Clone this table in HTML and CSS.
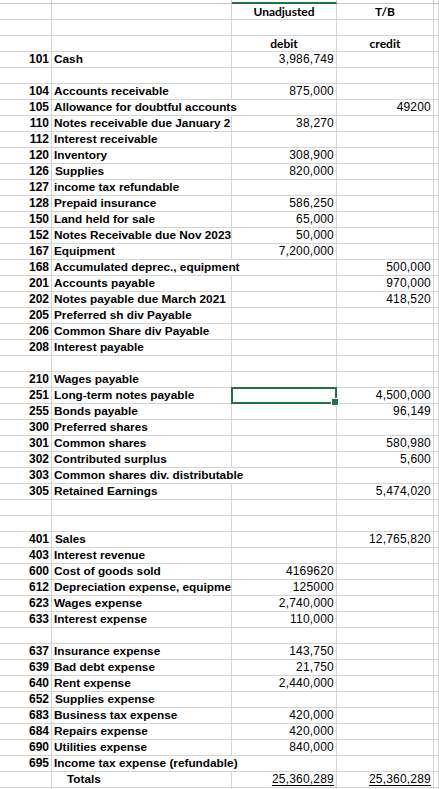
FILE: index.html
```html
<!DOCTYPE html>
<html>
<head>
<meta charset="utf-8">
<link rel="stylesheet" href="styles.css">
</head>
<body>
<div class="sheet">
  <div class="r top"><span></span><span></span><span class="sel-col"></span><span></span><span></span></div>
  <div class="r"><span></span><span></span><span class="h">Unadjusted</span><span class="h">T/B</span><span></span></div>
  <div class="r"><span></span><span></span><span></span><span></span><span></span></div>
  <div class="r"><span></span><span></span><span class="h">debit</span><span class="h">credit</span><span></span></div>
  <div class="r"><span class="a">101</span><span class="b">Cash</span><span class="n">3,986,749</span><span class="n"></span><span></span></div>
  <div class="r"><span></span><span></span><span></span><span></span><span></span></div>
  <div class="r"><span class="a">104</span><span class="b">Accounts receivable</span><span class="n">875,000</span><span class="n"></span><span></span></div>
  <div class="r"><span class="a">105</span><span class="b ov">Allowance for doubtful accounts</span><span class="n"></span><span class="n">49200</span><span></span></div>
  <div class="r"><span class="a">110</span><span class="b">Notes receivable due January 2</span><span class="n">38,270</span><span class="n"></span><span></span></div>
  <div class="r"><span class="a">112</span><span class="b">Interest receivable</span><span class="n"></span><span class="n"></span><span></span></div>
  <div class="r"><span class="a">120</span><span class="b">Inventory</span><span class="n">308,900</span><span class="n"></span><span></span></div>
  <div class="r"><span class="a">126</span><span class="b ind">Supplies</span><span class="n">820,000</span><span class="n"></span><span></span></div>
  <div class="r"><span class="a">127</span><span class="b">income tax refundable</span><span class="n"></span><span class="n"></span><span></span></div>
  <div class="r"><span class="a">128</span><span class="b">Prepaid insurance</span><span class="n">586,250</span><span class="n"></span><span></span></div>
  <div class="r"><span class="a">150</span><span class="b">Land held for sale</span><span class="n">65,000</span><span class="n"></span><span></span></div>
  <div class="r"><span class="a">152</span><span class="b">Notes Receivable due Nov 2023</span><span class="n">50,000</span><span class="n"></span><span></span></div>
  <div class="r"><span class="a">167</span><span class="b">Equipment</span><span class="n">7,200,000</span><span class="n"></span><span></span></div>
  <div class="r"><span class="a">168</span><span class="b ov">Accumulated deprec., equipment</span><span class="n"></span><span class="n">500,000</span><span></span></div>
  <div class="r"><span class="a">201</span><span class="b">Accounts payable</span><span class="n"></span><span class="n">970,000</span><span></span></div>
  <div class="r"><span class="a">202</span><span class="b">Notes payable due March 2021</span><span class="n"></span><span class="n">418,520</span><span></span></div>
  <div class="r"><span class="a">205</span><span class="b">Preferred sh div Payable</span><span class="n"></span><span class="n"></span><span></span></div>
  <div class="r"><span class="a">206</span><span class="b">Common Share div Payable</span><span class="n"></span><span class="n"></span><span></span></div>
  <div class="r"><span class="a">208</span><span class="b">Interest payable</span><span class="n"></span><span class="n"></span><span></span></div>
  <div class="r"><span></span><span></span><span></span><span></span><span></span></div>
  <div class="r"><span class="a">210</span><span class="b">Wages payable</span><span class="n"></span><span class="n"></span><span></span></div>
  <div class="r"><span class="a">251</span><span class="b">Long-term notes payable</span><span class="n active"><span class="cursor"><span class="handle"></span></span></span><span class="n">4,500,000</span><span></span></div>
  <div class="r"><span class="a">255</span><span class="b">Bonds payable</span><span class="n"></span><span class="n">96,149</span><span></span></div>
  <div class="r"><span class="a">300</span><span class="b">Preferred shares</span><span class="n"></span><span class="n"></span><span></span></div>
  <div class="r"><span class="a">301</span><span class="b">Common shares</span><span class="n"></span><span class="n">580,980</span><span></span></div>
  <div class="r"><span class="a">302</span><span class="b">Contributed surplus</span><span class="n"></span><span class="n">5,600</span><span></span></div>
  <div class="r"><span class="a">303</span><span class="b ov">Common shares div. distributable</span><span class="n"></span><span class="n"></span><span></span></div>
  <div class="r"><span class="a">305</span><span class="b">Retained Earnings</span><span class="n"></span><span class="n">5,474,020</span><span></span></div>
  <div class="r"><span></span><span></span><span></span><span></span><span></span></div>
  <div class="r"><span></span><span></span><span></span><span></span><span></span></div>
  <div class="r"><span class="a">401</span><span class="b ind">Sales</span><span class="n"></span><span class="n">12,765,820</span><span></span></div>
  <div class="r"><span class="a">403</span><span class="b">Interest revenue</span><span class="n"></span><span class="n"></span><span></span></div>
  <div class="r"><span class="a">600</span><span class="b">Cost of goods sold</span><span class="n">4169620</span><span class="n"></span><span></span></div>
  <div class="r"><span class="a">612</span><span class="b clip">Depreciation expense, equipme</span><span class="n">125000</span><span class="n"></span><span></span></div>
  <div class="r"><span class="a">623</span><span class="b">Wages expense</span><span class="n">2,740,000</span><span class="n"></span><span></span></div>
  <div class="r"><span class="a">633</span><span class="b">Interest expense</span><span class="n">110,000</span><span class="n"></span><span></span></div>
  <div class="r"><span></span><span></span><span></span><span></span><span></span></div>
  <div class="r"><span class="a">637</span><span class="b">Insurance expense</span><span class="n">143,750</span><span class="n"></span><span></span></div>
  <div class="r"><span class="a">639</span><span class="b">Bad debt expense</span><span class="n">21,750</span><span class="n"></span><span></span></div>
  <div class="r"><span class="a">640</span><span class="b">Rent expense</span><span class="n">2,440,000</span><span class="n"></span><span></span></div>
  <div class="r"><span class="a">652</span><span class="b ind">Supplies expense</span><span class="n"></span><span class="n"></span><span></span></div>
  <div class="r"><span class="a">683</span><span class="b">Business tax expense</span><span class="n">420,000</span><span class="n"></span><span></span></div>
  <div class="r"><span class="a">684</span><span class="b">Repairs expense</span><span class="n">420,000</span><span class="n"></span><span></span></div>
  <div class="r"><span class="a">690</span><span class="b">Utilities expense</span><span class="n">840,000</span><span class="n"></span><span></span></div>
  <div class="r"><span class="a">695</span><span class="b ov">Income tax expense (refundable)</span><span class="n"></span><span class="n"></span><span></span></div>
  <div class="r"><span class="a"></span><span class="b tot">Totals</span><span class="n u">25,360,289</span><span class="n u">25,360,289</span><span></span></div>
  <div class="r"><span></span><span></span><span></span><span></span><span></span></div>
</div>
</body>
</html>
```
FILE: styles.css
```css
html, body {
  margin: 0;
  padding: 0;
  background: #ffffff;
  overflow: hidden;
}

.sheet {
  display: flex;
  flex-direction: column;
  font-family: "Liberation Sans", Arial, sans-serif;
  font-size: 12px;
  color: #000;
}

.r {
  display: grid;
  grid-template-columns: 52px 180px 105px 97px 1fr;
  height: 16px;
  flex: none;
}

.r > span {
  box-sizing: border-box;
  border-right: 1px solid #d4d4d4;
  border-bottom: 1px solid #d4d4d4;
  line-height: 15px;
  white-space: nowrap;
  padding: 0 2px;
  position: relative;
}

.r.top {
  height: 4px;
}

.r.top > span {
  border-bottom-color: #c3c3c3;
  border-right-color: #c8c8c8;
  line-height: 0;
}

.r.top > .sel-col {
  border-bottom: 2px solid #217346;
  border-right-color: #c8c8c8;
}

.a {
  text-align: right;
  font-weight: bold;
}

.b {
  font-weight: bold;
  font-size: 11.8px;
  z-index: 1;
}

.b.ov {
  border-right-color: transparent !important;
}

.b.clip {
  overflow: hidden;
}

.b.ind {
  padding-left: 3px;
}

.b.tot {
  padding-left: 15px;
}

.n {
  text-align: right;
  letter-spacing: 0.2px;
}

.h {
  font-family: Lato, "Liberation Sans", sans-serif;
  font-weight: bold;
  font-size: 12px;
  text-align: center;
}

.u {
  text-decoration: underline;
  text-underline-offset: 2px;
}

.cursor {
  position: absolute;
  left: -1px;
  top: -1px;
  width: 106px;
  height: 17px;
  box-sizing: border-box;
  border: 2px solid #217346;
  z-index: 3;
}

.handle {
  position: absolute;
  right: -4px;
  bottom: -4px;
  width: 6px;
  height: 6px;
  background: #217346;
  border: 1px solid #ffffff;
}
```
